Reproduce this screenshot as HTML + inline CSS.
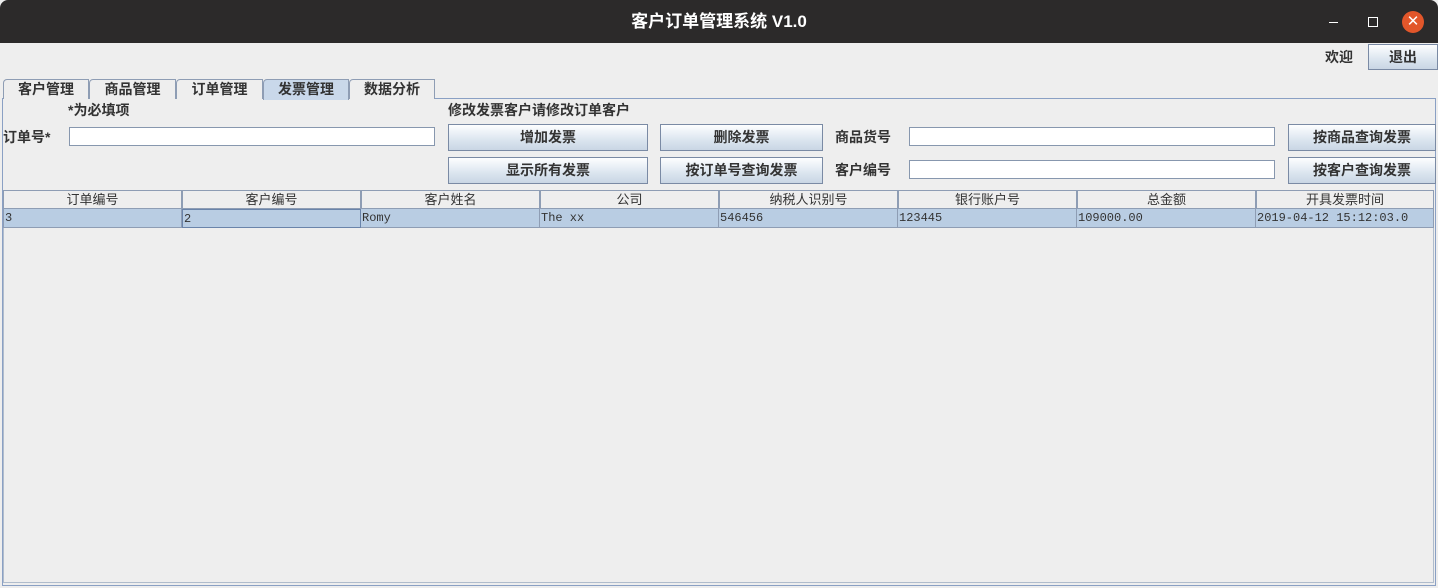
<!DOCTYPE html>
<html><head><meta charset="utf-8"><style>
*{box-sizing:border-box;margin:0;padding:0}
body{width:1438px;height:588px;background:#eeeeee;font-family:"Liberation Sans","Noto Sans CJK SC",sans-serif;font-size:13px;color:#333;position:relative;overflow:hidden}
.a{position:absolute}
.title{left:0;top:0;width:1438px;height:43px;background:#2c2a2a;border-radius:8px 8px 0 0;color:#fff;font-weight:bold;font-size:17px;text-align:center;line-height:44px}
.btn{position:absolute;border:1px solid #7a8aa4;background:linear-gradient(#fdfeff,#dbe5ef 60%,#c9d6e4);font-weight:bold;font-size:14px;text-align:center;color:#333}
.inp{position:absolute;background:#fff;border:1px solid #8797ae;height:19px}
.tab{position:absolute;top:79px;height:20px;border:1px solid #8e9db4;border-bottom:none;background:#eeeeee;font-weight:bold;font-size:14px;text-align:center;line-height:18px;border-radius:4px 0 0 0}
.lbl{position:absolute;font-weight:bold;font-size:14px;line-height:18px}
.th{position:absolute;top:190px;height:19px;border:1px solid #8e9db4;background:#eeeeee;text-align:center;font-size:13px;line-height:18px;color:#333}
.td{position:absolute;top:209px;height:19px;background:#b9cde3;border-right:1px solid #8e9db4;border-bottom:1px solid #8e9db4;font-family:"Liberation Mono",monospace;font-size:12px;line-height:19px;padding-left:1px;color:#333}
</style></head><body>
<div class="a title">客户订单管理系统 V1.0</div>
<div class="a" style="left:1329px;top:22px;width:9px;height:1px;background:#fff"></div>
<div class="a" style="left:1368px;top:17px;width:10px;height:10px;border:1.5px solid #fff"></div>
<div class="a" style="left:1402px;top:11px;width:22px;height:22px;border-radius:50%;background:#e2562a;color:#fff;text-align:center;line-height:22px;font-size:15px">✕</div>

<div class="lbl" style="left:1325px;top:48px">欢迎</div>
<div class="btn" style="left:1368px;top:44px;width:70px;height:26px;line-height:24px;font-size:14px">退出</div>

<div class="a" style="left:2px;top:98px;width:1434px;height:488px;border:1px solid #8aa0c4;background:#eeeeee"></div>
<div class="tab" style="left:3px;width:86px">客户管理</div>
<div class="tab" style="left:89px;width:87px">商品管理</div>
<div class="tab" style="left:176px;width:87px">订单管理</div>
<div class="tab" style="left:263px;width:86px;background:#c9d8ea;height:21px">发票管理</div>
<div class="tab" style="left:349px;width:86px">数据分析</div>

<div class="lbl" style="left:68px;top:101px">*为必填项</div>
<div class="lbl" style="left:448px;top:101px">修改发票客户请修改订单客户</div>
<div class="lbl" style="left:3px;top:128px">订单号*</div>
<div class="inp" style="left:69px;top:127px;width:366px"></div>

<div class="btn" style="left:448px;top:124px;width:200px;height:27px;line-height:25px">增加发票</div>
<div class="btn" style="left:660px;top:124px;width:163px;height:27px;line-height:25px">删除发票</div>
<div class="btn" style="left:448px;top:157px;width:200px;height:27px;line-height:25px">显示所有发票</div>
<div class="btn" style="left:660px;top:157px;width:163px;height:27px;line-height:25px">按订单号查询发票</div>
<div class="lbl" style="left:835px;top:128px">商品货号</div>
<div class="lbl" style="left:835px;top:161px">客户编号</div>
<div class="inp" style="left:909px;top:127px;width:366px"></div>
<div class="inp" style="left:909px;top:160px;width:366px"></div>
<div class="btn" style="left:1288px;top:124px;width:148px;height:27px;line-height:25px">按商品查询发票</div>
<div class="btn" style="left:1288px;top:157px;width:148px;height:27px;line-height:25px">按客户查询发票</div>

<div class="a" style="left:3px;top:190px;width:1431px;height:393px;background:#eeeeee;border:1px solid #b0bccc"></div>
<div class="th" style="left:3px;width:179px">订单编号</div>
<div class="th" style="left:182px;width:179px">客户编号</div>
<div class="th" style="left:361px;width:179px">客户姓名</div>
<div class="th" style="left:540px;width:179px">公司</div>
<div class="th" style="left:719px;width:179px">纳税人识别号</div>
<div class="th" style="left:898px;width:179px">银行账户号</div>
<div class="th" style="left:1077px;width:179px">总金额</div>
<div class="th" style="left:1256px;width:178px">开具发票时间</div>
<div class="td" style="left:3px;width:179px;border-left:1px solid #8e9db4">3</div>
<div class="td" style="left:182px;width:179px;border:1px solid #6a84aa">2</div>
<div class="td" style="left:361px;width:179px">Romy</div>
<div class="td" style="left:540px;width:179px">The xx</div>
<div class="td" style="left:719px;width:179px">546456</div>
<div class="td" style="left:898px;width:179px">123445</div>
<div class="td" style="left:1077px;width:179px">109000.00</div>
<div class="td" style="left:1256px;width:178px">2019-04-12 15:12:03.0</div>
</body></html>
